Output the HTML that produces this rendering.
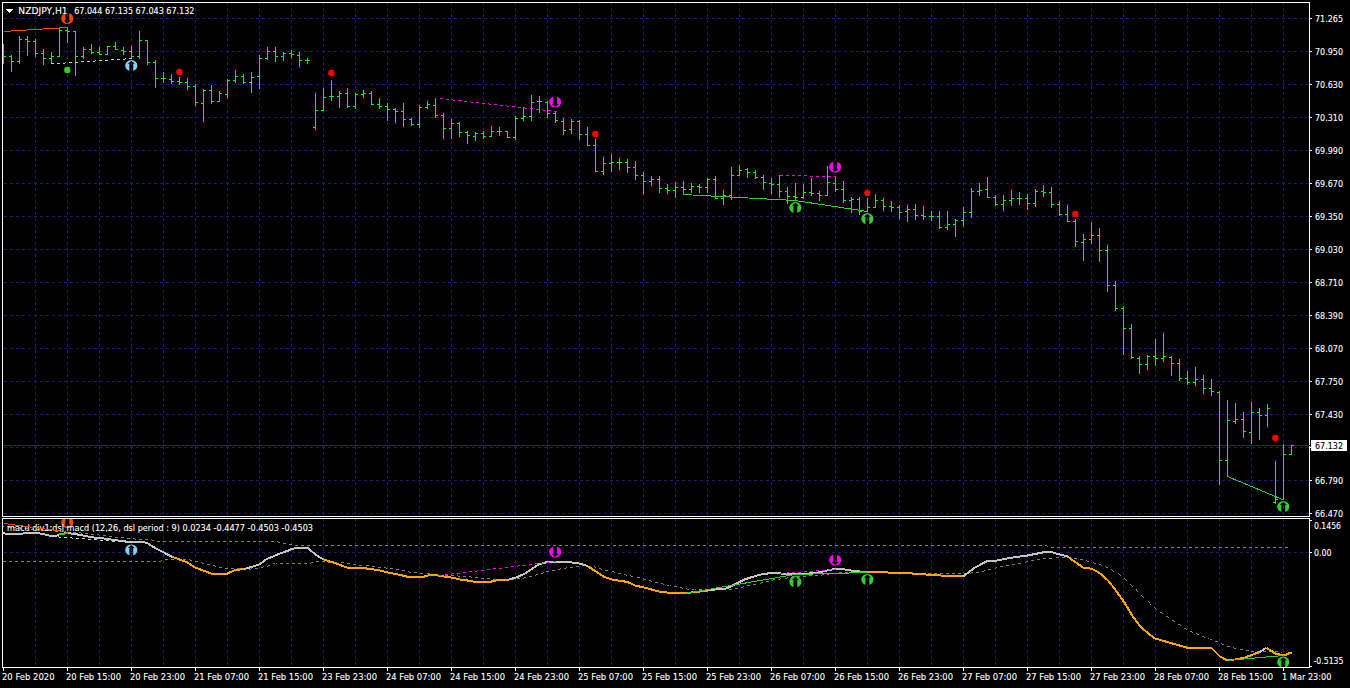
<!DOCTYPE html>
<html lang="en"><head><meta charset="utf-8"><title>NZDJPY,H1</title>
<style>html,body{margin:0;padding:0;background:#000;overflow:hidden}svg{display:block}text{font-family:"DejaVu Sans","Liberation Sans",sans-serif;font-size:9px;fill:#fff;stroke:#fff;stroke-width:0.1px}.c{shape-rendering:crispEdges}</style></head><body>
<svg width="1350" height="688" viewBox="0 0 1350 688">
<rect width="1350" height="688" fill="#000"/>
<defs><clipPath id="cm"><rect x="3" y="3" width="1306" height="513"/></clipPath><clipPath id="ci"><rect x="3" y="519" width="1306" height="148"/></clipPath><clipPath id="ce"><ellipse cx="0" cy="0" rx="6.1" ry="5.6"/></clipPath></defs>
<g class="c" stroke="#1b1b78" stroke-width="1" fill="none">
<path clip-path="url(#cm)" stroke-dasharray="3 3" d="M35.5 2V516M67.5 2V516M99.5 2V516M131.5 2V516M163.5 2V516M195.5 2V516M227.5 2V516M259.5 2V516M291.5 2V516M323.5 2V516M355.5 2V516M387.5 2V516M419.5 2V516M451.5 2V516M483.5 2V516M515.5 2V516M547.5 2V516M579.5 2V516M611.5 2V516M643.5 2V516M675.5 2V516M707.5 2V516M739.5 2V516M771.5 2V516M803.5 2V516M835.5 2V516M867.5 2V516M899.5 2V516M931.5 2V516M963.5 2V516M995.5 2V516M1027.5 2V516M1059.5 2V516M1091.5 2V516M1123.5 2V516M1155.5 2V516M1187.5 2V516M1219.5 2V516M1251.5 2V516M1283.5 2V516"/>
<path clip-path="url(#ci)" stroke-dasharray="3 3" d="M35.5 518V667M67.5 518V667M99.5 518V667M131.5 518V667M163.5 518V667M195.5 518V667M227.5 518V667M259.5 518V667M291.5 518V667M323.5 518V667M355.5 518V667M387.5 518V667M419.5 518V667M451.5 518V667M483.5 518V667M515.5 518V667M547.5 518V667M579.5 518V667M611.5 518V667M643.5 518V667M675.5 518V667M707.5 518V667M739.5 518V667M771.5 518V667M803.5 518V667M835.5 518V667M867.5 518V667M899.5 518V667M931.5 518V667M963.5 518V667M995.5 518V667M1027.5 518V667M1059.5 518V667M1091.5 518V667M1123.5 518V667M1155.5 518V667M1187.5 518V667M1219.5 518V667M1251.5 518V667M1283.5 518V667"/>
<path stroke-dasharray="3 3" d="M4 18.5H1309M4 51.5H1309M4 84.5H1309M4 117.5H1309M4 150.5H1309M4 183.5H1309M4 216.5H1309M4 249.5H1309M4 282.5H1309M4 315.5H1309M4 348.5H1309M4 381.5H1309M4 414.5H1309M4 447.5H1309M4 480.5H1309M4 513.5H1309M4 552.5H1309"/>
</g>
<rect class="c" x="3" y="445" width="1306" height="1" fill="#20207e"/>
<path class="c" fill="#808080" d="M3 526h1v1h-1zM7 526h2v1h-2zM9 527h1v1h-1zM13 527h3v1h-3zM19 527h1v1h-1zM20 528h2v1h-2zM25 528h3v1h-3zM31 529h3v1h-3zM37 529h3v1h-3zM43 530h3v1h-3zM49 530h3v1h-3zM55 531h3v1h-3zM61 531h3v1h-3zM67 532h3v1h-3zM73 532h3v1h-3zM79 532h2v1h-2zM81 533h1v1h-1zM85 533h3v1h-3zM91 534h3v1h-3zM97 534h2v1h-2zM99 535h1v1h-1zM103 535h3v1h-3zM109 536h3v1h-3zM115 537h3v1h-3zM121 537h3v1h-3zM127 538h3v1h-3zM133 538h2v1h-2zM135 539h1v1h-1zM139 539h3v1h-3zM145 539h3v1h-3zM151 539h1v1h-1zM152 540h2v1h-2zM157 541h3v1h-3zM163 541h3v1h-3zM169 541h3v1h-3zM175 541h3v1h-3zM181 541h3v1h-3zM187 541h3v1h-3zM193 541h3v1h-3zM199 541h3v1h-3zM205 541h3v1h-3zM211 541h3v1h-3zM217 541h3v1h-3zM223 541h3v1h-3zM229 541h3v1h-3zM235 541h3v1h-3zM241 541h3v1h-3zM247 541h3v1h-3zM253 541h3v1h-3zM259 541h3v1h-3zM265 541h3v1h-3zM271 541h3v1h-3zM277 541h1v1h-1zM278 542h2v1h-2zM283 543h3v1h-3zM289 544h3v1h-3zM295 545h3v1h-3zM301 545h3v1h-3zM307 545h3v1h-3zM313 545h3v1h-3zM319 545h3v1h-3zM325 545h3v1h-3zM331 545h3v1h-3zM337 545h3v1h-3zM343 545h3v1h-3zM349 545h3v1h-3zM355 545h3v1h-3zM361 545h3v1h-3zM367 545h3v1h-3zM373 545h3v1h-3zM379 545h3v1h-3zM385 545h3v1h-3zM391 545h3v1h-3zM397 545h3v1h-3zM403 545h3v1h-3zM409 545h3v1h-3zM415 545h3v1h-3zM421 545h3v1h-3zM427 545h3v1h-3zM433 545h3v1h-3zM439 545h3v1h-3zM445 545h3v1h-3zM451 545h3v1h-3zM457 545h3v1h-3zM463 545h3v1h-3zM469 545h3v1h-3zM475 545h3v1h-3zM481 545h3v1h-3zM487 545h3v1h-3zM493 545h3v1h-3zM499 545h3v1h-3zM505 545h3v1h-3zM511 545h3v1h-3zM517 545h3v1h-3zM523 545h3v1h-3zM529 545h3v1h-3zM535 545h3v1h-3zM541 545h3v1h-3zM547 545h3v1h-3zM553 545h3v1h-3zM559 545h3v1h-3zM565 545h3v1h-3zM571 545h3v1h-3zM577 545h3v1h-3zM583 545h3v1h-3zM589 545h3v1h-3zM595 545h3v1h-3zM601 545h3v1h-3zM607 545h3v1h-3zM613 545h3v1h-3zM619 545h3v1h-3zM625 545h3v1h-3zM631 545h3v1h-3zM637 545h3v1h-3zM643 545h3v1h-3zM649 545h3v1h-3zM655 545h3v1h-3zM661 545h3v1h-3zM667 545h3v1h-3zM673 545h3v1h-3zM679 545h3v1h-3zM685 545h3v1h-3zM691 545h3v1h-3zM697 545h3v1h-3zM703 545h3v1h-3zM709 545h3v1h-3zM715 545h3v1h-3zM721 545h3v1h-3zM727 545h3v1h-3zM733 545h3v1h-3zM739 545h3v1h-3zM745 545h3v1h-3zM751 545h3v1h-3zM757 545h3v1h-3zM763 545h3v1h-3zM769 545h3v1h-3zM775 545h3v1h-3zM781 545h3v1h-3zM787 545h3v1h-3zM793 545h3v1h-3zM799 545h3v1h-3zM805 545h3v1h-3zM811 545h3v1h-3zM817 545h3v1h-3zM823 545h3v1h-3zM829 545h3v1h-3zM835 545h3v1h-3zM841 545h3v1h-3zM847 545h3v1h-3zM853 545h3v1h-3zM859 545h3v1h-3zM865 545h3v1h-3zM871 545h3v1h-3zM877 545h3v1h-3zM883 545h3v1h-3zM889 545h3v1h-3zM895 545h3v1h-3zM901 545h3v1h-3zM907 545h3v1h-3zM913 545h3v1h-3zM919 545h3v1h-3zM925 545h3v1h-3zM931 545h3v1h-3zM937 545h3v1h-3zM943 545h3v1h-3zM949 545h3v1h-3zM955 545h3v1h-3zM961 545h3v1h-3zM967 545h3v1h-3zM973 545h3v1h-3zM979 545h3v1h-3zM985 545h3v1h-3zM991 545h3v1h-3zM997 545h3v1h-3zM1003 545h3v1h-3zM1009 545h3v1h-3zM1015 545h3v1h-3zM1021 545h3v1h-3zM1027 545h3v1h-3zM1033 545h3v1h-3zM1039 545h3v1h-3zM1045 545h2v1h-2zM1047 546h1v1h-1zM1051 547h3v1h-3zM1057 547h3v1h-3zM1063 547h3v1h-3zM1069 547h3v1h-3zM1075 547h3v1h-3zM1081 547h3v1h-3zM1087 547h3v1h-3zM1093 547h3v1h-3zM1099 547h3v1h-3zM1105 547h3v1h-3zM1111 547h3v1h-3zM1117 547h3v1h-3zM1123 547h3v1h-3zM1129 547h3v1h-3zM1135 547h3v1h-3zM1141 547h3v1h-3zM1147 547h3v1h-3zM1153 547h3v1h-3zM1159 547h3v1h-3zM1165 547h3v1h-3zM1171 547h3v1h-3zM1177 547h3v1h-3zM1183 547h3v1h-3zM1189 547h3v1h-3zM1195 547h3v1h-3zM1201 547h3v1h-3zM1207 547h3v1h-3zM1213 547h3v1h-3zM1219 547h3v1h-3zM1225 547h3v1h-3zM1231 547h3v1h-3zM1237 547h3v1h-3zM1243 547h3v1h-3zM1249 547h3v1h-3zM1255 547h3v1h-3zM1261 547h3v1h-3zM1267 547h3v1h-3zM1273 547h3v1h-3zM1279 547h3v1h-3zM1285 547h3v1h-3zM1056 557h3v1h-3zM1062 557h3v1h-3zM1068 557h3v1h-3zM1043 558h3v1h-3zM1049 558h3v1h-3zM1074 558h3v1h-3zM165 559h3v1h-3zM171 559h3v1h-3zM177 559h3v1h-3zM183 559h3v1h-3zM189 559h1v1h-1zM1037 559h3v1h-3zM1080 559h3v1h-3zM161 560h1v1h-1zM190 560h2v1h-2zM1031 560h3v1h-3zM1086 560h1v1h-1zM3 561h3v1h-3zM9 561h3v1h-3zM15 561h3v1h-3zM21 561h3v1h-3zM27 561h3v1h-3zM33 561h3v1h-3zM39 561h3v1h-3zM45 561h3v1h-3zM51 561h3v1h-3zM57 561h3v1h-3zM63 561h3v1h-3zM69 561h3v1h-3zM75 561h3v1h-3zM81 561h3v1h-3zM87 561h3v1h-3zM93 561h3v1h-3zM99 561h3v1h-3zM105 561h3v1h-3zM111 561h3v1h-3zM117 561h3v1h-3zM123 561h3v1h-3zM129 561h3v1h-3zM135 561h3v1h-3zM141 561h3v1h-3zM147 561h3v1h-3zM153 561h3v1h-3zM159 561h2v1h-2zM195 561h3v1h-3zM316 561h3v1h-3zM322 561h3v1h-3zM1026 561h2v1h-2zM1087 561h2v1h-2zM201 562h1v1h-1zM311 562h2v1h-2zM328 562h3v1h-3zM334 562h3v1h-3zM341 562h3v1h-3zM1025 562h1v1h-1zM1093 562h1v1h-1zM202 563h2v1h-2zM273 563h2v1h-2zM276 563h1v1h-1zM280 563h3v1h-3zM286 563h3v1h-3zM292 563h3v1h-3zM298 563h3v1h-3zM304 563h3v1h-3zM310 563h1v1h-1zM347 563h3v1h-3zM1018 563h3v1h-3zM1094 563h2v1h-2zM207 564h3v1h-3zM353 564h3v1h-3zM1012 564h3v1h-3zM1099 564h2v1h-2zM213 565h2v1h-2zM268 565h2v1h-2zM359 565h3v1h-3zM366 565h3v1h-3zM582 565h3v1h-3zM1006 565h3v1h-3zM1101 565h1v1h-1zM215 566h1v1h-1zM263 566h1v1h-1zM267 566h1v1h-1zM372 566h3v1h-3zM576 566h3v1h-3zM588 566h3v1h-3zM594 566h1v1h-1zM1000 566h3v1h-3zM1105 566h1v1h-1zM219 567h3v1h-3zM261 567h2v1h-2zM378 567h3v1h-3zM384 567h2v1h-2zM566 567h1v1h-1zM570 567h3v1h-3zM595 567h1v1h-1zM996 567h1v1h-1zM1106 567h2v1h-2zM225 568h3v1h-3zM231 568h3v1h-3zM237 568h3v1h-3zM251 568h1v1h-1zM255 568h3v1h-3zM386 568h1v1h-1zM390 568h3v1h-3zM560 568h1v1h-1zM564 568h2v1h-2zM599 568h2v1h-2zM995 568h1v1h-1zM243 569h3v1h-3zM249 569h2v1h-2zM396 569h3v1h-3zM558 569h2v1h-2zM601 569h1v1h-1zM988 569h3v1h-3zM1111 569h1v1h-1zM402 570h3v1h-3zM552 570h3v1h-3zM605 570h3v1h-3zM984 570h1v1h-1zM1112 570h1v1h-1zM408 571h1v1h-1zM546 571h3v1h-3zM612 571h2v1h-2zM851 571h3v1h-3zM857 571h3v1h-3zM863 571h3v1h-3zM869 571h3v1h-3zM875 571h3v1h-3zM982 571h2v1h-2zM1113 571h1v1h-1zM409 572h2v1h-2zM414 572h3v1h-3zM543 572h1v1h-1zM614 572h1v1h-1zM839 572h3v1h-3zM845 572h3v1h-3zM881 572h3v1h-3zM887 572h3v1h-3zM893 572h3v1h-3zM899 572h2v1h-2zM904 572h3v1h-3zM910 572h3v1h-3zM971 572h2v1h-2zM976 572h3v1h-3zM420 573h3v1h-3zM427 573h3v1h-3zM541 573h2v1h-2zM618 573h3v1h-3zM829 573h1v1h-1zM833 573h3v1h-3zM916 573h3v1h-3zM922 573h3v1h-3zM928 573h3v1h-3zM934 573h3v1h-3zM940 573h3v1h-3zM946 573h3v1h-3zM952 573h3v1h-3zM958 573h3v1h-3zM964 573h3v1h-3zM970 573h1v1h-1zM1118 573h1v1h-1zM433 574h3v1h-3zM536 574h2v1h-2zM624 574h2v1h-2zM822 574h2v1h-2zM827 574h2v1h-2zM1119 574h1v1h-1zM439 575h3v1h-3zM445 575h3v1h-3zM451 575h3v1h-3zM457 575h1v1h-1zM535 575h1v1h-1zM626 575h1v1h-1zM630 575h1v1h-1zM809 575h3v1h-3zM815 575h3v1h-3zM821 575h1v1h-1zM1120 575h1v1h-1zM458 576h2v1h-2zM463 576h3v1h-3zM469 576h2v1h-2zM529 576h3v1h-3zM631 576h2v1h-2zM792 576h2v1h-2zM797 576h3v1h-3zM803 576h3v1h-3zM471 577h1v1h-1zM475 577h3v1h-3zM524 577h2v1h-2zM637 577h3v1h-3zM787 577h1v1h-1zM791 577h1v1h-1zM481 578h3v1h-3zM487 578h3v1h-3zM517 578h3v1h-3zM523 578h1v1h-1zM643 578h1v1h-1zM780 578h1v1h-1zM785 578h2v1h-2zM1124 578h1v1h-1zM493 579h3v1h-3zM499 579h3v1h-3zM505 579h3v1h-3zM511 579h3v1h-3zM644 579h2v1h-2zM773 579h2v1h-2zM778 579h2v1h-2zM1125 579h1v1h-1zM649 580h2v1h-2zM772 580h1v1h-1zM1126 580h1v1h-1zM651 581h1v1h-1zM766 581h3v1h-3zM655 582h3v1h-3zM761 582h2v1h-2zM661 583h2v1h-2zM760 583h1v1h-1zM663 584h1v1h-1zM753 584h3v1h-3zM1130 584h1v1h-1zM667 585h2v1h-2zM670 585h1v1h-1zM747 585h3v1h-3zM1131 585h1v1h-1zM674 586h3v1h-3zM743 586h1v1h-1zM1132 586h1v1h-1zM680 587h2v1h-2zM741 587h2v1h-2zM682 588h1v1h-1zM686 588h1v1h-1zM735 588h3v1h-3zM687 589h2v1h-2zM692 589h2v1h-2zM695 589h1v1h-1zM699 589h3v1h-3zM705 589h3v1h-3zM711 589h3v1h-3zM717 589h3v1h-3zM723 589h3v1h-3zM729 589h3v1h-3zM1136 589h1v1h-1zM1136 590h1v1h-1zM1137 591h1v1h-1zM1141 595h1v1h-1zM1142 596h1v1h-1zM1143 597h1v1h-1zM1148 601h1v1h-1zM1149 602h1v1h-1zM1150 604h1v1h-1zM1154 607h1v1h-1zM1155 608h1v1h-1zM1156 609h1v1h-1zM1160 612h2v1h-2zM1162 613h1v1h-1zM1166 616h2v1h-2zM1168 617h1v1h-1zM1172 620h2v1h-2zM1174 621h1v1h-1zM1178 624h2v1h-2zM1180 625h1v1h-1zM1184 628h2v1h-2zM1186 629h1v1h-1zM1190 631h2v1h-2zM1192 632h1v1h-1zM1196 633h1v1h-1zM1197 634h2v1h-2zM1202 636h2v1h-2zM1204 637h1v1h-1zM1208 638h1v1h-1zM1210 639h2v1h-2zM1215 641h3v1h-3zM1221 643h1v1h-1zM1222 644h2v1h-2zM1227 646h3v1h-3zM1233 647h1v1h-1zM1234 648h2v1h-2zM1240 649h3v1h-3zM1246 650h3v1h-3zM1251 651h3v1h-3zM1257 651h3v1h-3zM1263 651h3v1h-3zM1269 651h3v1h-3zM1275 651h3v1h-3zM1281 652h1v1h-1z"/>
<g class="c" clip-path="url(#ci)" fill="none" stroke-width="2" stroke-linejoin="round">
<polyline stroke="#c4c4c4" points="3,533 7,534 19,534 27,533 35,532.5 43,534 51,536 56,536 59,534.5 67,533 75,534 80,535 92.5,537.4 105,538.6 117.5,540.5 127.5,541.75 143.75,542 148,543.6 155,548 172,556.75"/>
<polyline stroke="#ffa500" points="172,556.75 187.5,562.4 195,567.4 211.25,573.6 227.5,573.6 235,569.9 243.75,569.25"/>
<polyline stroke="#c4c4c4" points="243.75,569.25 250,567.4 260,564.25 265,559.9 275,555.5 290,549.9 292.5,548.6 300,548 308,548 315,554.25 323,559.25"/>
<polyline stroke="#ffa500" points="323,559.25 335,563 347.5,567.75 362.5,568 377.5,569.9 390,573 400,574.9 407.5,576.75 423.75,576.75 430,574.9 435,574.9 443.75,576.5 452.5,577.75 460,579.5 467.5,580.5 476.25,582 491.25,582 492.5,580.9 500,580.1 508,579.9"/>
<polyline stroke="#c4c4c4" points="508,579.9 516.25,577.4 525,573.6 538.75,564.25 547.5,562 560,562 571.25,562.4 580,563.6 587.5,566.1"/>
<polyline stroke="#ffa500" points="587.5,566.1 596.25,571.75 603.75,576.75 612.5,579.6 627.5,582 635,585.5 645,587.75 660,591.75 668.75,592.75 685,593 692.5,592.4 707.5,590.5"/>
<polyline stroke="#c4c4c4" points="707.5,590.5 716.25,589.25 720,589 726,588.6 733.75,584.9 745,579.25 755,576.1 763.75,573.9 772.5,573 780,573.4 787.5,574.25 812.5,573.4 822.5,571.75 828.75,569.9 836.25,569 843.75,569.25 851.25,570.5 859.4,571.5"/>
<polyline stroke="#ffa500" points="859.4,571.5 880,572 891.25,572.75 915,573.6 931.25,574.9 947.5,575.9 963.75,575.9"/>
<polyline stroke="#c4c4c4" points="963.75,575.9 975,567.4 987.5,561.1 995,560.9 1011.25,557.75 1027.5,555.5 1040,553 1045,552 1051.25,552 1058.75,554.25 1067.5,556.5"/>
<polyline stroke="#ffa500" points="1067.5,556.5 1083.75,568 1091.25,568.6 1098.75,572.4 1107.5,579.9 1115,589.25 1123.75,601.5 1132.5,615.9 1140,625.9 1148.75,634 1155,638.4 1167.5,642.1 1187.5,647.75 1211.25,647.75 1220,656.5 1226.3,660 1234.7,659.5 1243.6,658 1251.5,655.1 1259.4,652.1"/>
<polyline stroke="#c4c4c4" points="1259.4,652.1 1266.4,647.7"/>
<polyline stroke="#ffa500" points="1266.4,647.7 1276.2,654.1 1285.1,655.1 1289.1,653.1 1292,652.6"/>
<polyline stroke="#32cd32" points="59,534.5 64,533.6 68,533"/>
</g>
<path class="c" clip-path="url(#cm)" fill="#00ff00" d="M3 44h1v20h-1zM4 56h2v1h-2zM11 55h1v17h-1zM9 56h2v1h-2zM12 61h2v1h-2zM19 36h1v28h-1zM17 61h2v1h-2zM20 39h2v1h-2zM27 36h1v20h-1zM25 39h2v1h-2zM28 41h2v1h-2zM35 39h1v18h-1zM33 41h2v1h-2zM36 53h2v1h-2zM43 49h1v16h-1zM41 53h2v1h-2zM44 58h2v1h-2zM51 52h1v12h-1zM49 58h2v1h-2zM52 56h2v1h-2zM59 27h1v30h-1zM57 56h2v1h-2zM60 30h2v1h-2zM67 27h1v16h-1zM65 30h2v1h-2zM68 31h2v1h-2zM75 31h1v45h-1zM73 31h2v1h-2zM76 56h2v1h-2zM83 47h1v12h-1zM81 56h2v1h-2zM84 49h2v1h-2zM91 44h1v10h-1zM89 49h2v1h-2zM92 52h2v1h-2zM99 47h1v8h-1zM97 52h2v1h-2zM100 54h2v1h-2zM107 46h1v9h-1zM105 54h2v1h-2zM108 46h2v1h-2zM115 42h1v8h-1zM113 46h2v1h-2zM116 49h2v1h-2zM123 47h1v8h-1zM121 50h2v1h-2zM124 51h2v1h-2zM131 46h1v12h-1zM129 51h2v1h-2zM132 56h2v1h-2zM139 31h1v28h-1zM137 56h2v1h-2zM140 40h2v1h-2zM147 40h1v25h-1zM145 40h2v1h-2zM148 62h2v1h-2zM155 60h1v28h-1zM153 62h2v1h-2zM156 78h2v1h-2zM163 72h1v11h-1zM161 78h2v1h-2zM164 78h2v1h-2zM171 74h1v10h-1zM169 79h2v1h-2zM172 81h2v1h-2zM179 77h1v8h-1zM177 81h2v1h-2zM180 82h2v1h-2zM187 78h1v12h-1zM185 82h2v1h-2zM188 86h2v1h-2zM195 84h1v22h-1zM193 86h2v1h-2zM196 102h2v1h-2zM203 89h1v33h-1zM201 103h2v1h-2zM204 90h2v1h-2zM211 85h1v19h-1zM209 90h2v1h-2zM212 101h2v1h-2zM219 91h1v11h-1zM217 101h2v1h-2zM220 93h2v1h-2zM227 79h1v19h-1zM225 94h2v1h-2zM228 80h2v1h-2zM235 70h1v13h-1zM233 80h2v1h-2zM236 76h2v1h-2zM243 74h1v10h-1zM241 76h2v1h-2zM244 82h2v1h-2zM251 72h1v21h-1zM249 82h2v1h-2zM252 77h2v1h-2zM259 55h1v34h-1zM257 76h2v1h-2zM260 58h2v1h-2zM267 47h1v13h-1zM265 58h2v1h-2zM268 51h2v1h-2zM275 47h1v15h-1zM273 51h2v1h-2zM276 56h2v1h-2zM283 52h1v9h-1zM281 56h2v1h-2zM284 53h2v1h-2zM291 50h1v8h-1zM289 53h2v1h-2zM292 54h2v1h-2zM299 52h1v15h-1zM297 55h2v1h-2zM300 60h2v1h-2zM307 58h1v6h-1zM305 60h2v1h-2zM308 60h2v1h-2zM315 93h1v37h-1zM313 127h2v1h-2zM316 110h2v1h-2zM323 88h1v23h-1zM321 110h2v1h-2zM324 97h2v1h-2zM331 80h1v21h-1zM329 96h2v1h-2zM332 96h2v1h-2zM339 91h1v17h-1zM337 96h2v1h-2zM340 93h2v1h-2zM347 88h1v20h-1zM345 93h2v1h-2zM348 106h2v1h-2zM355 93h1v16h-1zM353 106h2v1h-2zM356 94h2v1h-2zM363 90h1v8h-1zM361 94h2v1h-2zM364 93h2v1h-2zM371 91h1v14h-1zM369 93h2v1h-2zM372 104h2v1h-2zM379 98h1v11h-1zM377 104h2v1h-2zM380 106h2v1h-2zM387 103h1v18h-1zM385 106h2v1h-2zM388 109h2v1h-2zM395 108h1v15h-1zM393 109h2v1h-2zM396 111h2v1h-2zM403 103h1v24h-1zM401 111h2v1h-2zM404 119h2v1h-2zM411 118h1v8h-1zM409 119h2v1h-2zM412 124h2v1h-2zM419 105h1v23h-1zM417 124h2v1h-2zM420 107h2v1h-2zM427 101h1v8h-1zM425 107h2v1h-2zM428 104h2v1h-2zM435 98h1v20h-1zM433 105h2v1h-2zM436 115h2v1h-2zM443 113h1v26h-1zM441 115h2v1h-2zM444 128h2v1h-2zM451 119h1v20h-1zM449 128h2v1h-2zM452 123h2v1h-2zM459 122h1v15h-1zM457 123h2v1h-2zM460 132h2v1h-2zM467 131h1v13h-1zM465 132h2v1h-2zM468 135h2v1h-2zM475 132h1v9h-1zM473 136h2v1h-2zM476 133h2v1h-2zM483 131h1v8h-1zM481 133h2v1h-2zM484 136h2v1h-2zM491 126h1v11h-1zM489 136h2v1h-2zM492 131h2v1h-2zM499 127h1v9h-1zM497 131h2v1h-2zM500 131h2v1h-2zM507 131h1v7h-1zM505 131h2v1h-2zM508 137h2v1h-2zM515 116h1v24h-1zM513 137h2v1h-2zM516 118h2v1h-2zM523 107h1v14h-1zM521 118h2v1h-2zM524 116h2v1h-2zM531 95h1v26h-1zM529 116h2v1h-2zM532 102h2v1h-2zM539 96h1v17h-1zM537 101h2v1h-2zM540 101h2v1h-2zM547 101h1v17h-1zM545 102h2v1h-2zM548 113h2v1h-2zM555 112h1v11h-1zM553 113h2v1h-2zM556 120h2v1h-2zM563 118h1v17h-1zM561 121h2v1h-2zM564 130h2v1h-2zM571 119h1v15h-1zM569 129h2v1h-2zM572 121h2v1h-2zM579 120h1v20h-1zM577 121h2v1h-2zM580 134h2v1h-2zM587 127h1v19h-1zM585 134h2v1h-2zM588 145h2v1h-2zM595 139h1v33h-1zM593 145h2v1h-2zM596 171h2v1h-2zM603 157h1v18h-1zM601 171h2v1h-2zM604 163h2v1h-2zM611 154h1v18h-1zM609 163h2v1h-2zM612 162h2v1h-2zM619 158h1v12h-1zM617 162h2v1h-2zM620 162h2v1h-2zM627 159h1v14h-1zM625 162h2v1h-2zM628 167h2v1h-2zM635 161h1v19h-1zM633 167h2v1h-2zM636 175h2v1h-2zM643 172h1v22h-1zM641 175h2v1h-2zM644 181h2v1h-2zM651 176h1v10h-1zM649 181h2v1h-2zM652 179h2v1h-2zM659 176h1v17h-1zM657 179h2v1h-2zM660 188h2v1h-2zM667 184h1v10h-1zM665 188h2v1h-2zM668 190h2v1h-2zM675 182h1v16h-1zM673 190h2v1h-2zM676 187h2v1h-2zM683 181h1v14h-1zM681 187h2v1h-2zM684 189h2v1h-2zM691 183h1v10h-1zM689 189h2v1h-2zM692 186h2v1h-2zM699 184h1v9h-1zM697 186h2v1h-2zM700 187h2v1h-2zM707 178h1v15h-1zM705 187h2v1h-2zM708 179h2v1h-2zM715 176h1v23h-1zM713 179h2v1h-2zM716 198h2v1h-2zM723 190h1v15h-1zM721 198h2v1h-2zM724 195h2v1h-2zM731 167h1v33h-1zM729 195h2v1h-2zM732 175h2v1h-2zM739 165h1v11h-1zM737 175h2v1h-2zM740 170h2v1h-2zM747 168h1v10h-1zM745 169h2v1h-2zM748 172h2v1h-2zM755 170h1v9h-1zM753 172h2v1h-2zM756 177h2v1h-2zM763 175h1v15h-1zM761 177h2v1h-2zM764 182h2v1h-2zM771 178h1v16h-1zM769 183h2v1h-2zM772 184h2v1h-2zM779 175h1v23h-1zM777 184h2v1h-2zM780 191h2v1h-2zM787 187h1v17h-1zM785 191h2v1h-2zM788 196h2v1h-2zM795 183h1v17h-1zM793 196h2v1h-2zM796 197h2v1h-2zM803 184h1v15h-1zM801 197h2v1h-2zM804 192h2v1h-2zM811 178h1v18h-1zM809 192h2v1h-2zM812 193h2v1h-2zM819 191h1v10h-1zM817 193h2v1h-2zM820 195h2v1h-2zM827 166h1v30h-1zM825 195h2v1h-2zM828 182h2v1h-2zM835 177h1v15h-1zM833 183h2v1h-2zM836 189h2v1h-2zM843 181h1v22h-1zM841 189h2v1h-2zM844 200h2v1h-2zM851 197h1v16h-1zM849 200h2v1h-2zM852 199h2v1h-2zM859 197h1v18h-1zM857 199h2v1h-2zM860 211h2v1h-2zM867 198h1v14h-1zM865 211h2v1h-2zM868 207h2v1h-2zM875 194h1v14h-1zM873 207h2v1h-2zM876 200h2v1h-2zM883 198h1v13h-1zM881 200h2v1h-2zM884 206h2v1h-2zM891 201h1v11h-1zM889 206h2v1h-2zM892 207h2v1h-2zM899 205h1v14h-1zM897 207h2v1h-2zM900 212h2v1h-2zM907 205h1v17h-1zM905 211h2v1h-2zM908 209h2v1h-2zM915 204h1v16h-1zM913 209h2v1h-2zM916 215h2v1h-2zM923 206h1v14h-1zM921 215h2v1h-2zM924 216h2v1h-2zM931 211h1v10h-1zM929 216h2v1h-2zM932 216h2v1h-2zM939 211h1v18h-1zM937 216h2v1h-2zM940 227h2v1h-2zM947 211h1v19h-1zM945 227h2v1h-2zM948 224h2v1h-2zM955 219h1v18h-1zM953 224h2v1h-2zM956 220h2v1h-2zM963 207h1v20h-1zM961 220h2v1h-2zM964 212h2v1h-2zM971 188h1v30h-1zM969 212h2v1h-2zM972 191h2v1h-2zM979 183h1v13h-1zM977 191h2v1h-2zM980 190h2v1h-2zM987 177h1v21h-1zM985 189h2v1h-2zM988 197h2v1h-2zM995 195h1v11h-1zM993 197h2v1h-2zM996 204h2v1h-2zM1003 195h1v16h-1zM1001 204h2v1h-2zM1004 200h2v1h-2zM1011 190h1v16h-1zM1009 200h2v1h-2zM1012 198h2v1h-2zM1019 192h1v13h-1zM1017 198h2v1h-2zM1020 198h2v1h-2zM1027 194h1v16h-1zM1025 198h2v1h-2zM1028 203h2v1h-2zM1035 189h1v18h-1zM1033 203h2v1h-2zM1036 191h2v1h-2zM1043 185h1v12h-1zM1041 191h2v1h-2zM1044 192h2v1h-2zM1051 187h1v21h-1zM1049 192h2v1h-2zM1052 204h2v1h-2zM1059 201h1v15h-1zM1057 204h2v1h-2zM1060 214h2v1h-2zM1067 205h1v17h-1zM1065 214h2v1h-2zM1068 221h2v1h-2zM1075 219h1v28h-1zM1073 221h2v1h-2zM1076 241h2v1h-2zM1083 234h1v27h-1zM1081 242h2v1h-2zM1084 239h2v1h-2zM1091 222h1v22h-1zM1089 239h2v1h-2zM1092 235h2v1h-2zM1099 228h1v34h-1zM1097 235h2v1h-2zM1100 250h2v1h-2zM1107 245h1v47h-1zM1105 250h2v1h-2zM1108 285h2v1h-2zM1115 281h1v30h-1zM1113 285h2v1h-2zM1116 308h2v1h-2zM1123 306h1v49h-1zM1121 308h2v1h-2zM1124 328h2v1h-2zM1131 324h1v35h-1zM1129 328h2v1h-2zM1132 357h2v1h-2zM1139 356h1v18h-1zM1137 358h2v1h-2zM1140 364h2v1h-2zM1147 355h1v15h-1zM1145 364h2v1h-2zM1148 356h2v1h-2zM1155 339h1v27h-1zM1153 356h2v1h-2zM1156 358h2v1h-2zM1163 333h1v29h-1zM1161 358h2v1h-2zM1164 356h2v1h-2zM1171 356h1v20h-1zM1169 357h2v1h-2zM1172 363h2v1h-2zM1179 359h1v22h-1zM1177 363h2v1h-2zM1180 378h2v1h-2zM1187 371h1v14h-1zM1185 378h2v1h-2zM1188 382h2v1h-2zM1195 367h1v19h-1zM1193 382h2v1h-2zM1196 379h2v1h-2zM1203 375h1v19h-1zM1201 379h2v1h-2zM1204 388h2v1h-2zM1211 379h1v17h-1zM1209 388h2v1h-2zM1212 391h2v1h-2zM1219 391h1v94h-1zM1217 392h2v1h-2zM1220 460h2v1h-2zM1227 400h1v77h-1zM1225 460h2v1h-2zM1228 420h2v1h-2zM1235 403h1v21h-1zM1233 421h2v1h-2zM1236 419h2v1h-2zM1243 412h1v26h-1zM1241 419h2v1h-2zM1244 431h2v1h-2zM1251 402h1v42h-1zM1249 432h2v1h-2zM1252 412h2v1h-2zM1259 408h1v32h-1zM1257 412h2v1h-2zM1260 415h2v1h-2zM1267 404h1v23h-1zM1265 415h2v1h-2zM1268 408h2v1h-2zM1275 461h1v43h-1zM1273 502h2v1h-2zM1276 499h2v1h-2zM1283 444h1v56h-1zM1281 499h2v1h-2zM1284 454h2v1h-2zM1291 445h1v10h-1zM1289 454h2v1h-2zM1292 445h2v1h-2z"/>
<g class="c" fill="none" stroke-width="1">
<path stroke="#ff4500" d="M4 31.5H11M11 30.5H27M27 29.5H43M43 28.5H59M59 27.5H68"/>
<path stroke="none" fill="#add8e6" d="M125 58h1v1h-1zM129 58h3v1h-3zM111 59h3v1h-3zM117 59h3v1h-3zM123 59h2v1h-2zM95 60h1v1h-1zM99 60h3v1h-3zM105 60h3v1h-3zM81 61h3v1h-3zM87 61h3v1h-3zM93 61h2v1h-2zM65 62h1v1h-1zM69 62h3v1h-3zM75 62h3v1h-3zM51 63h3v1h-3zM57 63h3v1h-3zM63 63h2v1h-2z"/>
<path stroke="none" fill="#ff00ff" d="M440 98h3v1h-3zM446 99h3v1h-3zM452 99h1v1h-1zM453 100h2v1h-2zM458 100h3v1h-3zM464 101h3v1h-3zM470 101h1v1h-1zM471 102h2v1h-2zM476 102h3v1h-3zM482 103h3v1h-3zM488 103h1v1h-1zM489 104h2v1h-2zM494 104h3v1h-3zM500 105h3v1h-3zM506 105h1v1h-1zM507 106h2v1h-2zM512 106h3v1h-3zM518 107h3v1h-3zM524 107h1v1h-1zM525 108h2v1h-2zM530 108h3v1h-3zM536 109h3v1h-3zM542 109h1v1h-1zM543 110h2v1h-2zM548 110h3v1h-3zM554 111h3v1h-3z"/>
<path stroke="none" fill="#ff00ff" d="M780 175h3v1h-3zM786 175h3v1h-3zM792 175h3v1h-3zM798 175h3v1h-3zM804 175h3v1h-3zM810 176h3v1h-3zM816 176h3v1h-3zM822 176h3v1h-3zM828 176h3v1h-3zM834 176h2v1h-2z"/>
<polyline stroke="#32cd32" points="683,194.5 795,200.5 867.5,211.5"/>
<polyline stroke="#32cd32" points="1227.5,476.5 1283.5,499.9"/>
<g clip-path="url(#ci)">
<path stroke="none" fill="#add8e6" d="M52 536h3v1h-3zM58 536h1v1h-1zM59 537h2v1h-2zM64 537h3v1h-3zM70 537h2v1h-2zM72 538h1v1h-1zM76 538h3v1h-3zM82 538h3v1h-3zM88 539h3v1h-3zM94 539h3v1h-3zM100 540h3v1h-3zM106 540h3v1h-3zM112 541h3v1h-3zM118 541h3v1h-3zM124 541h1v1h-1zM125 542h2v1h-2zM130 542h2v1h-2z"/>
<path stroke="none" fill="#ff00ff" d="M553 561h3v1h-3zM543 562h1v1h-1zM547 562h3v1h-3zM535 563h3v1h-3zM541 563h2v1h-2zM529 564h3v1h-3zM518 565h2v1h-2zM523 565h3v1h-3zM511 566h3v1h-3zM517 566h1v1h-1zM505 567h3v1h-3zM493 568h3v1h-3zM499 568h3v1h-3zM487 569h3v1h-3zM477 570h1v1h-1zM481 570h3v1h-3zM469 571h3v1h-3zM475 571h2v1h-2zM463 572h3v1h-3zM452 573h2v1h-2zM457 573h3v1h-3zM445 574h3v1h-3zM451 574h1v1h-1zM439 575h3v1h-3z"/>
<path stroke="none" fill="#ff00ff" d="M828 569h3v1h-3zM834 569h2v1h-2zM816 570h3v1h-3zM822 570h3v1h-3zM804 571h3v1h-3zM810 571h3v1h-3zM787 572h2v1h-2zM792 572h3v1h-3zM798 572h3v1h-3zM780 573h3v1h-3zM786 573h1v1h-1z"/>
<polyline stroke="#32cd32" points="685,593.4 795,574.5 867.5,572.5"/>
<polyline stroke="#32cd32" points="1227.8,660.4 1283.7,655.5"/>
</g>
</g>
<circle cx="67.3" cy="70" r="3.2" fill="#32cd32"/>
<circle cx="179.4" cy="72" r="3.2" fill="#ff0000"/>
<circle cx="331.4" cy="73" r="3.2" fill="#ff0000"/>
<circle cx="595.4" cy="134" r="3.2" fill="#ff0000"/>
<circle cx="867.4" cy="193" r="3.2" fill="#ff0000"/>
<circle cx="1075.4" cy="214" r="3.2" fill="#ff0000"/>
<circle cx="1275.4" cy="438" r="3.2" fill="#ff0000"/>
<g><g transform="translate(67.3 18.5)" clip-path="url(#ce)"><path fill="#ff4500" fill-rule="evenodd" d="M-8 -8H8V8H-8ZM-1.9 -8V1.9H-3.5L0 4.9L3.5 1.9H1.9V-8Z"/></g></g>
<g><g transform="translate(131.3 65.6)" clip-path="url(#ce)"><path fill="#87cefa" fill-rule="evenodd" d="M-8 -8H8V8H-8ZM-1.9 8V-1.9H-3.5L0 -4.9L3.5 -1.9H1.9V8Z"/></g></g>
<g><g transform="translate(555.2 102)" clip-path="url(#ce)"><path fill="#ff00ff" fill-rule="evenodd" d="M-8 -8H8V8H-8ZM-1.9 -8V1.9H-3.5L0 4.9L3.5 1.9H1.9V-8Z"/></g></g>
<g><g transform="translate(835.2 167)" clip-path="url(#ce)"><path fill="#ff00ff" fill-rule="evenodd" d="M-8 -8H8V8H-8ZM-1.9 -8V1.9H-3.5L0 4.9L3.5 1.9H1.9V-8Z"/></g></g>
<g><g transform="translate(795.4 207.6)" clip-path="url(#ce)"><path fill="#32cd32" fill-rule="evenodd" d="M-8 -8H8V8H-8ZM-1.9 8V-1.9H-3.5L0 -4.9L3.5 -1.9H1.9V8Z"/></g></g>
<g><g transform="translate(867.4 218.7)" clip-path="url(#ce)"><path fill="#32cd32" fill-rule="evenodd" d="M-8 -8H8V8H-8ZM-1.9 8V-1.9H-3.5L0 -4.9L3.5 -1.9H1.9V8Z"/></g></g>
<g><g transform="translate(1283.3 506.6)" clip-path="url(#ce)"><path fill="#32cd32" fill-rule="evenodd" d="M-8 -8H8V8H-8ZM-1.9 8V-1.9H-3.5L0 -4.9L3.5 -1.9H1.9V8Z"/></g></g>
<g clip-path="url(#ci)"><g transform="translate(67.3 522.5)" clip-path="url(#ce)"><path fill="#ff4500" fill-rule="evenodd" d="M-8 -8H8V8H-8ZM-1.9 -8V1.9H-3.5L0 4.9L3.5 1.9H1.9V-8Z"/></g></g>
<g clip-path="url(#ci)"><g transform="translate(131.3 550)" clip-path="url(#ce)"><path fill="#87cefa" fill-rule="evenodd" d="M-8 -8H8V8H-8ZM-1.9 8V-1.9H-3.5L0 -4.9L3.5 -1.9H1.9V8Z"/></g></g>
<g clip-path="url(#ci)"><g transform="translate(555.2 552)" clip-path="url(#ce)"><path fill="#ff00ff" fill-rule="evenodd" d="M-8 -8H8V8H-8ZM-1.9 -8V1.9H-3.5L0 4.9L3.5 1.9H1.9V-8Z"/></g></g>
<g clip-path="url(#ci)"><g transform="translate(835.2 560)" clip-path="url(#ce)"><path fill="#ff00ff" fill-rule="evenodd" d="M-8 -8H8V8H-8ZM-1.9 -8V1.9H-3.5L0 4.9L3.5 1.9H1.9V-8Z"/></g></g>
<g clip-path="url(#ci)"><g transform="translate(795.4 581.7)" clip-path="url(#ce)"><path fill="#32cd32" fill-rule="evenodd" d="M-8 -8H8V8H-8ZM-1.9 8V-1.9H-3.5L0 -4.9L3.5 -1.9H1.9V8Z"/></g></g>
<g clip-path="url(#ci)"><g transform="translate(867.4 579.5)" clip-path="url(#ce)"><path fill="#32cd32" fill-rule="evenodd" d="M-8 -8H8V8H-8ZM-1.9 8V-1.9H-3.5L0 -4.9L3.5 -1.9H1.9V8Z"/></g></g>
<g clip-path="url(#ci)"><g transform="translate(1283.3 662.2)" clip-path="url(#ce)"><path fill="#32cd32" fill-rule="evenodd" d="M-8 -8H8V8H-8ZM-1.9 8V-1.9H-3.5L0 -4.9L3.5 -1.9H1.9V8Z"/></g></g>
<g class="c" fill="#fff">
<rect x="2" y="2" width="1308" height="1"/>
<rect x="2" y="516" width="1308" height="1"/>
<rect x="2" y="2" width="1" height="515"/>
<rect x="1309" y="2" width="1" height="515"/>
<rect x="2" y="518" width="1308" height="1"/>
<rect x="2" y="667" width="1308" height="1"/>
<rect x="2" y="518" width="1" height="150"/>
<rect x="1309" y="518" width="1" height="150"/>
<path d="M1310 18h2v1h-2zM1310 51h2v1h-2zM1310 84h2v1h-2zM1310 117h2v1h-2zM1310 150h2v1h-2zM1310 183h2v1h-2zM1310 216h2v1h-2zM1310 249h2v1h-2zM1310 282h2v1h-2zM1310 315h2v1h-2zM1310 348h2v1h-2zM1310 381h2v1h-2zM1310 414h2v1h-2zM1310 447h2v1h-2zM1310 480h2v1h-2zM1310 513h2v1h-2zM1310 520h2v1h-2zM1310 552h2v1h-2zM1310 666h2v1h-2zM3 668h1v3h-1zM67 668h1v3h-1zM131 668h1v3h-1zM195 668h1v3h-1zM259 668h1v3h-1zM323 668h1v3h-1zM387 668h1v3h-1zM451 668h1v3h-1zM515 668h1v3h-1zM579 668h1v3h-1zM643 668h1v3h-1zM707 668h1v3h-1zM771 668h1v3h-1zM835 668h1v3h-1zM899 668h1v3h-1zM963 668h1v3h-1zM1027 668h1v3h-1zM1091 668h1v3h-1zM1155 668h1v3h-1zM1219 668h1v3h-1zM1283 668h1v3h-1z"/>
<path d="M6 9h7v1h-7zM7 10h5v1h-5zM8 11h3v1h-3zM9 12h1v1h-1z"/>
</g>
<rect class="c" x="1309" y="445" width="1" height="1" fill="#20207e"/>
<text xml:space="preserve" x="18.3" y="0" transform="translate(0 14) scale(1 1)" textLength="49.4" lengthAdjust="spacingAndGlyphs">NZDJPY,H1</text>
<text xml:space="preserve" x="74.2" y="0" transform="translate(0 14) scale(1 1)" textLength="120.3" lengthAdjust="spacingAndGlyphs">67.044 67.135 67.043 67.132</text>
<text xml:space="preserve" x="7" y="0" transform="translate(0 531) scale(1 1)" textLength="306" lengthAdjust="spacingAndGlyphs">macd div1:dsl macd (12,26, dsl period : 9) 0.0234 -0.4477 -0.4503 -0.4503</text>
<text xml:space="preserve" x="1315" y="0" transform="translate(0 22) scale(1 1)" textLength="28" lengthAdjust="spacingAndGlyphs">71.265</text>
<text xml:space="preserve" x="1315" y="0" transform="translate(0 55) scale(1 1)" textLength="28" lengthAdjust="spacingAndGlyphs">70.950</text>
<text xml:space="preserve" x="1315" y="0" transform="translate(0 88) scale(1 1)" textLength="28" lengthAdjust="spacingAndGlyphs">70.630</text>
<text xml:space="preserve" x="1315" y="0" transform="translate(0 121) scale(1 1)" textLength="28" lengthAdjust="spacingAndGlyphs">70.310</text>
<text xml:space="preserve" x="1315" y="0" transform="translate(0 154) scale(1 1)" textLength="28" lengthAdjust="spacingAndGlyphs">69.990</text>
<text xml:space="preserve" x="1315" y="0" transform="translate(0 187) scale(1 1)" textLength="28" lengthAdjust="spacingAndGlyphs">69.670</text>
<text xml:space="preserve" x="1315" y="0" transform="translate(0 220) scale(1 1)" textLength="28" lengthAdjust="spacingAndGlyphs">69.350</text>
<text xml:space="preserve" x="1315" y="0" transform="translate(0 253) scale(1 1)" textLength="28" lengthAdjust="spacingAndGlyphs">69.030</text>
<text xml:space="preserve" x="1315" y="0" transform="translate(0 286) scale(1 1)" textLength="28" lengthAdjust="spacingAndGlyphs">68.710</text>
<text xml:space="preserve" x="1315" y="0" transform="translate(0 319) scale(1 1)" textLength="28" lengthAdjust="spacingAndGlyphs">68.390</text>
<text xml:space="preserve" x="1315" y="0" transform="translate(0 352) scale(1 1)" textLength="28" lengthAdjust="spacingAndGlyphs">68.070</text>
<text xml:space="preserve" x="1315" y="0" transform="translate(0 385) scale(1 1)" textLength="28" lengthAdjust="spacingAndGlyphs">67.750</text>
<text xml:space="preserve" x="1315" y="0" transform="translate(0 418) scale(1 1)" textLength="28" lengthAdjust="spacingAndGlyphs">67.430</text>
<text xml:space="preserve" x="1315" y="0" transform="translate(0 484) scale(1 1)" textLength="28" lengthAdjust="spacingAndGlyphs">66.790</text>
<text xml:space="preserve" x="1315" y="0" transform="translate(0 517) scale(1 1)" textLength="28" lengthAdjust="spacingAndGlyphs">66.470</text>
<rect class="c" x="1311" y="440" width="36" height="11" fill="#fff"/>
<text xml:space="preserve" x="1315" y="0" transform="translate(0 449) scale(1 1)" textLength="28" lengthAdjust="spacingAndGlyphs" style="fill:#000;stroke:#000">67.132</text>
<text xml:space="preserve" x="1314" y="0" transform="translate(0 529) scale(1 1)" textLength="27" lengthAdjust="spacingAndGlyphs">0.1456</text>
<text xml:space="preserve" x="1314" y="0" transform="translate(0 556) scale(1 1)" textLength="17.5" lengthAdjust="spacingAndGlyphs">0.00</text>
<text xml:space="preserve" x="1313.5" y="0" transform="translate(0 664) scale(1 1)" textLength="30" lengthAdjust="spacingAndGlyphs">-0.5135</text>
<text xml:space="preserve" x="2" y="0" transform="translate(0 680) scale(1 1)" textLength="52.5" lengthAdjust="spacingAndGlyphs">20 Feb 2020</text>
<text xml:space="preserve" x="66" y="0" transform="translate(0 680) scale(1 1)" textLength="55" lengthAdjust="spacingAndGlyphs">20 Feb 15:00</text>
<text xml:space="preserve" x="130" y="0" transform="translate(0 680) scale(1 1)" textLength="55" lengthAdjust="spacingAndGlyphs">20 Feb 23:00</text>
<text xml:space="preserve" x="194" y="0" transform="translate(0 680) scale(1 1)" textLength="55" lengthAdjust="spacingAndGlyphs">21 Feb 07:00</text>
<text xml:space="preserve" x="258" y="0" transform="translate(0 680) scale(1 1)" textLength="55" lengthAdjust="spacingAndGlyphs">21 Feb 15:00</text>
<text xml:space="preserve" x="322" y="0" transform="translate(0 680) scale(1 1)" textLength="55" lengthAdjust="spacingAndGlyphs">23 Feb 23:00</text>
<text xml:space="preserve" x="386" y="0" transform="translate(0 680) scale(1 1)" textLength="55" lengthAdjust="spacingAndGlyphs">24 Feb 07:00</text>
<text xml:space="preserve" x="450" y="0" transform="translate(0 680) scale(1 1)" textLength="55" lengthAdjust="spacingAndGlyphs">24 Feb 15:00</text>
<text xml:space="preserve" x="514" y="0" transform="translate(0 680) scale(1 1)" textLength="55" lengthAdjust="spacingAndGlyphs">24 Feb 23:00</text>
<text xml:space="preserve" x="578" y="0" transform="translate(0 680) scale(1 1)" textLength="55" lengthAdjust="spacingAndGlyphs">25 Feb 07:00</text>
<text xml:space="preserve" x="642" y="0" transform="translate(0 680) scale(1 1)" textLength="55" lengthAdjust="spacingAndGlyphs">25 Feb 15:00</text>
<text xml:space="preserve" x="706" y="0" transform="translate(0 680) scale(1 1)" textLength="55" lengthAdjust="spacingAndGlyphs">25 Feb 23:00</text>
<text xml:space="preserve" x="770" y="0" transform="translate(0 680) scale(1 1)" textLength="55" lengthAdjust="spacingAndGlyphs">26 Feb 07:00</text>
<text xml:space="preserve" x="834" y="0" transform="translate(0 680) scale(1 1)" textLength="55" lengthAdjust="spacingAndGlyphs">26 Feb 15:00</text>
<text xml:space="preserve" x="898" y="0" transform="translate(0 680) scale(1 1)" textLength="55" lengthAdjust="spacingAndGlyphs">26 Feb 23:00</text>
<text xml:space="preserve" x="962" y="0" transform="translate(0 680) scale(1 1)" textLength="55" lengthAdjust="spacingAndGlyphs">27 Feb 07:00</text>
<text xml:space="preserve" x="1026" y="0" transform="translate(0 680) scale(1 1)" textLength="55" lengthAdjust="spacingAndGlyphs">27 Feb 15:00</text>
<text xml:space="preserve" x="1090" y="0" transform="translate(0 680) scale(1 1)" textLength="55" lengthAdjust="spacingAndGlyphs">27 Feb 23:00</text>
<text xml:space="preserve" x="1154" y="0" transform="translate(0 680) scale(1 1)" textLength="55" lengthAdjust="spacingAndGlyphs">28 Feb 07:00</text>
<text xml:space="preserve" x="1218" y="0" transform="translate(0 680) scale(1 1)" textLength="55" lengthAdjust="spacingAndGlyphs">28 Feb 15:00</text>
<text xml:space="preserve" x="1282" y="0" transform="translate(0 680) scale(1 1)" textLength="49.5" lengthAdjust="spacingAndGlyphs">1 Mar 23:00</text>
<polyline class="c" fill="none" stroke="#ff4500" stroke-width="1" points="4,523.5 64,531.5 68,532.5"/>
</svg></body></html>
